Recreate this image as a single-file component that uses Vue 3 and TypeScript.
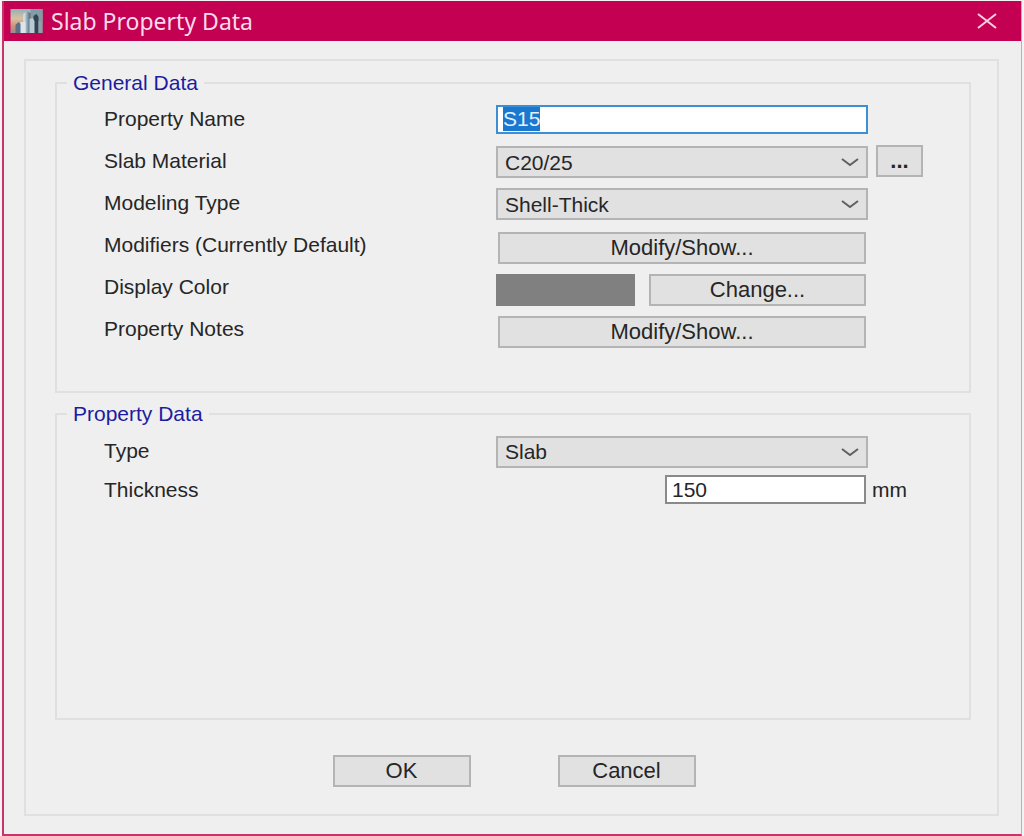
<script setup lang="ts">
import { onMounted, ref } from 'vue'

const propertyName = ref('S15')
const material = ref('C20/25')
const modelingType = ref('Shell-Thick')
const slabType = ref('Slab')
const thickness = ref('150')
const nameInput = ref<HTMLInputElement | null>(null)

onMounted(() => {
  nameInput.value?.focus()
  nameInput.value?.select()
})
</script>

<template>
  <main class="window">
    <header class="titlebar">
      <svg class="app-icon" viewBox="0 0 32 24" aria-hidden="true">
        <defs>
          <linearGradient id="sky" x1="0" y1="0" x2="0" y2="1">
            <stop offset="0" stop-color="#8fb3b8" />
            <stop offset="0.4" stop-color="#d9c0a0" />
            <stop offset="0.75" stop-color="#c98e78" />
            <stop offset="1" stop-color="#8f8f9c" />
          </linearGradient>
          <linearGradient id="tower" x1="0" y1="0" x2="1" y2="0">
            <stop offset="0" stop-color="#e8f1f4" />
            <stop offset="0.5" stop-color="#8fa9b6" />
            <stop offset="1" stop-color="#4b6478" />
          </linearGradient>
        </defs>
        <rect width="32" height="24" fill="url(#sky)" />
        <rect x="20" width="12" height="24" fill="#7f9ca8" />
        <path d="M5 24V16l3-3 3 3v8z" fill="#5b6f84" />
        <path d="M13 24V5l3-3 4 2v20z" fill="url(#tower)" />
        <path d="M10 24V13h5v11z" fill="#dce6ea" />
        <path d="M23 24V7l3-2 2 3v16z" fill="#34414f" />
        <path d="M19 24V10l3-1 2 3v12z" fill="#b9cbd2" />
        <path d="M28 24V12l3 1v11z" fill="#8ca5af" />
      </svg>
      <h1>Slab Property Data</h1>
      <button class="close" type="button" aria-label="Close">
        <svg viewBox="0 0 20 16" aria-hidden="true"><path d="M1 1L19 15M19 1L1 15" /></svg>
      </button>
    </header>

    <form class="panel" @submit.prevent>
      <fieldset>
        <legend>General Data</legend>
        <div class="row">
          <label for="name">Property Name</label>
          <input id="name" ref="nameInput" v-model="propertyName" class="active" type="text" />
        </div>
        <div class="row">
          <label for="material">Slab Material</label>
          <div class="select">
            <select id="material" v-model="material"><option>C20/25</option></select>
            <svg viewBox="0 0 18 8" aria-hidden="true"><path d="M1 1L9 7L17 1" /></svg>
          </div>
          <button class="more" type="button" aria-label="Material properties">...</button>
        </div>
        <div class="row">
          <label for="modeling">Modeling Type</label>
          <div class="select">
            <select id="modeling" v-model="modelingType"><option>Shell-Thick</option></select>
            <svg viewBox="0 0 18 8" aria-hidden="true"><path d="M1 1L9 7L17 1" /></svg>
          </div>
        </div>
        <div class="row">
          <label for="modifiers">Modifiers (Currently Default)</label>
          <div class="actions"><button id="modifiers" type="button">Modify/Show...</button></div>
        </div>
        <div class="row">
          <label for="color">Display Color</label>
          <div class="actions color">
            <span class="swatch"></span>
            <button id="color" type="button">Change...</button>
          </div>
        </div>
        <div class="row">
          <label for="notes">Property Notes</label>
          <div class="actions"><button id="notes" type="button">Modify/Show...</button></div>
        </div>
      </fieldset>

      <fieldset class="fill">
        <legend>Property Data</legend>
        <div class="row short">
          <label for="type">Type</label>
          <div class="select">
            <select id="type" v-model="slabType"><option>Slab</option></select>
            <svg viewBox="0 0 18 8" aria-hidden="true"><path d="M1 1L9 7L17 1" /></svg>
          </div>
        </div>
        <div class="row short">
          <label for="thickness">Thickness</label>
          <div class="measure"><input id="thickness" v-model="thickness" type="text" /></div>
          <span class="unit">mm</span>
        </div>
      </fieldset>

      <footer>
        <button type="submit">OK</button>
        <button type="button">Cancel</button>
      </footer>
    </form>
  </main>
</template>

<style>
body {
  background: #f4f2f4;
}
</style>

<style scoped>
* {
  box-sizing: border-box;
}
.window {
  display: flex;
  flex-direction: column;
  min-height: calc(100vh - 1px);
  margin: 1px 2px 0;
  border: solid #c73468;
  border-width: 0 0 2px 2px;
  border-right: 1px solid #b5b1b5;
  background: #efefef;
  color: #262626;
  font-family: "Liberation Sans", Arial, sans-serif;
  font-size: 21px;
}
.titlebar {
  display: flex;
  align-items: center;
  height: 40px;
  padding: 0 23px 0 6px;
  background: #c40052;
  color: #fbdbe9;
}
.app-icon {
  width: 33px;
  height: 24px;
}
h1 {
  flex: 1;
  margin: 0 0 0 8px;
  font: 400 23px/28px "Noto Sans", sans-serif;
}
.close {
  display: flex;
  width: 22px;
  height: 32px;
  padding: 0;
  align-items: center;
  justify-content: center;
  border: 0;
  background: none;
}
.close svg {
  width: 20px;
  height: 16px;
}
svg path[d^="M1 1"] {
  fill: none;
  stroke: #606060;
  stroke-width: 2;
}
.close svg path[d^="M1 1"] {
  stroke: #fbd0e2;
}
.panel {
  display: flex;
  flex: 1;
  flex-direction: column;
  margin: 18px 22px 18px 20px;
  padding: 11px 26px 27px 29px;
  border: 2px solid #e0e0e0;
}
fieldset {
  min-width: 0;
  margin: 0 0 10px;
  padding: 4px 46px 41px 47px;
  border: 2px solid #e0e0e0;
}
fieldset.fill {
  flex: 1;
  margin-bottom: 35px;
  padding-top: 6px;
}
legend {
  margin-left: -37px;
  padding: 0 6px;
  color: #1c1ca0;
  line-height: 22px;
}
.row {
  display: grid;
  grid-template-columns: 392fr 372fr 55fr;
  align-items: center;
  height: 42px;
}
.row.short {
  height: 39px;
}
input,
select,
button {
  height: 32px;
  margin: 0;
  border: 2px solid #b4b4b4;
  border-radius: 0;
  background: #e1e1e1;
  color: inherit;
  font: inherit;
  outline: 0;
}
button {
  padding: 0;
  font-size: 22px;
  line-height: 28px;
}
input {
  width: 100%;
  min-width: 0;
  height: 29px;
  padding: 0 5px;
  border-color: #8a8a8a;
  background: #fff;
}
input.active {
  border-color: #3c8fd4;
}
input::selection {
  background: #1a78d0;
  color: #e4f2ff;
}
.select {
  display: grid;
  align-items: center;
  padding-top: 2px;
}
.select > * {
  grid-area: 1 / 1;
}
select {
  width: 100%;
  padding: 0 30px 0 7px;
  appearance: none;
}
.select svg {
  justify-self: end;
  width: 18px;
  height: 8px;
  margin-right: 9px;
  pointer-events: none;
}
.more {
  margin-left: 8px;
  font-weight: 700;
}
.actions {
  display: flex;
  padding: 6px 2px 0;
}
.actions button {
  flex: 1;
}
.color {
  padding-left: 0;
}
.swatch {
  width: 139px;
  height: 32px;
  margin-right: 14px;
  background: #808080;
}
.measure {
  padding: 0 2px 0 169px;
}
.unit {
  padding-left: 4px;
}
footer {
  display: flex;
  justify-content: center;
  gap: 87px;
  padding-left: 2px;
}
footer button {
  width: 138px;
}
</style>
